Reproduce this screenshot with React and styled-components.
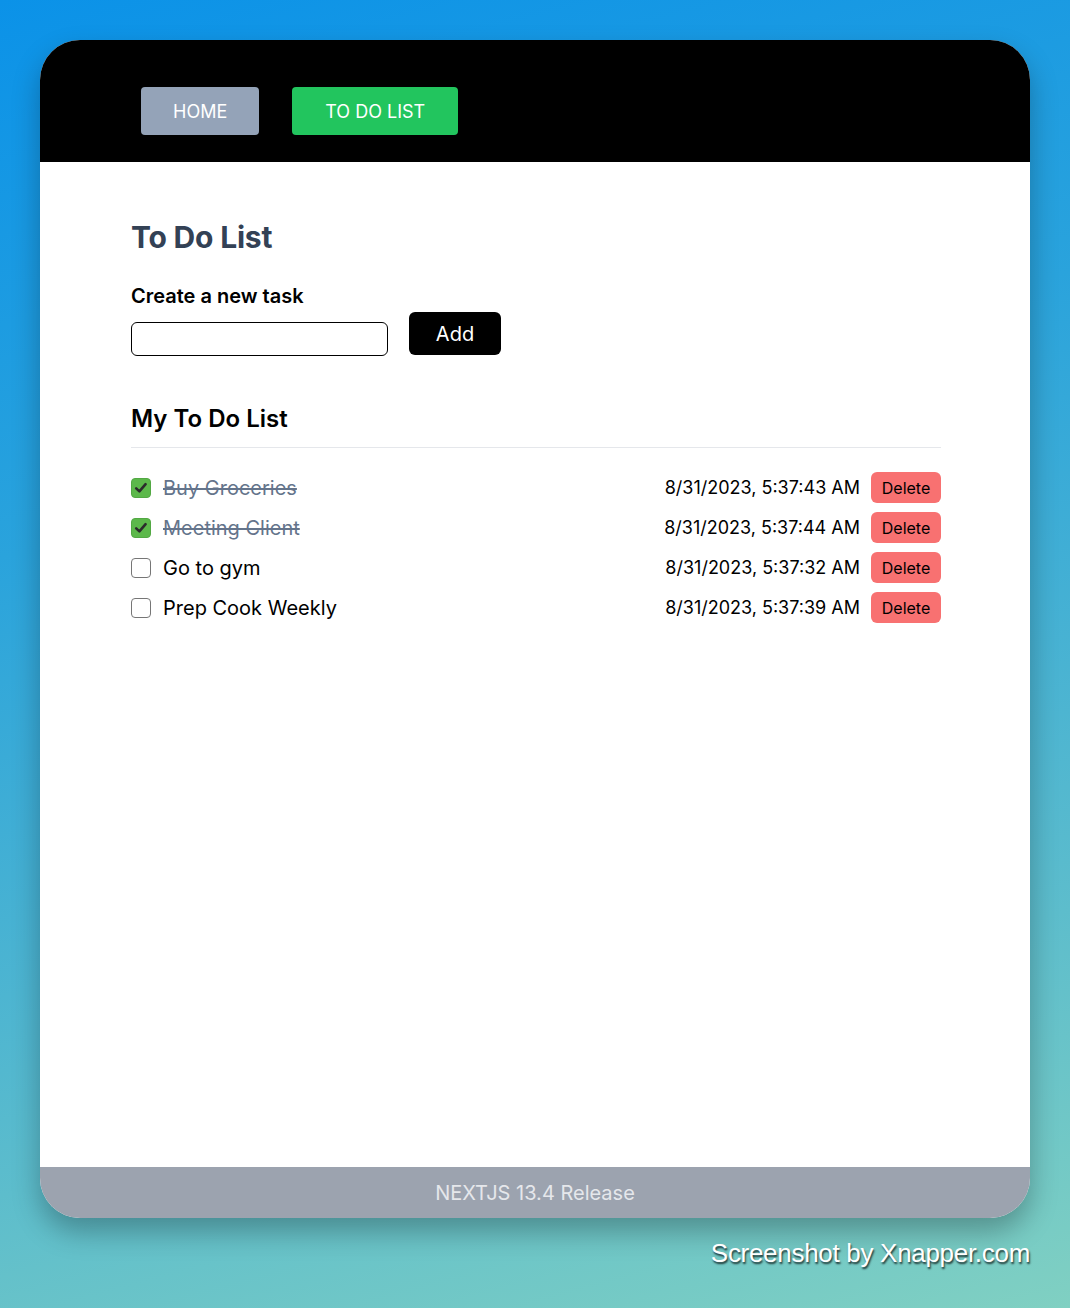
import React, { useState } from "react";
import styled, { createGlobalStyle } from "styled-components";

const Global = createGlobalStyle`
  html, body { margin: 0; padding: 0; }
  body {
    width: 1070px;
    min-height: 1308px;
    font-family: Inter, "Noto Sans", "Liberation Sans", sans-serif;
    background: linear-gradient(165deg, #0b92e8 0%, #2aa3dc 35%, #5dbdcc 75%, #80d0c2 100%);
  }
  * { box-sizing: border-box; }
`;

const Page = styled.div`
  width: 1070px;
  height: 1308px;
  padding: 40px 40px 0;
  display: flex;
  flex-direction: column;
`;

const Window = styled.div`
  height: 1178px;
  border-radius: 40px;
  overflow: hidden;
  background: #fff;
  display: flex;
  flex-direction: column;
  box-shadow: 0 14px 28px rgba(0, 0, 0, 0.28);
`;

const Header = styled.header`
  height: 122px;
  background: #000;
  display: flex;
  align-items: flex-start;
  gap: 33px;
  padding: 47px 0 0 101px;
`;

const NavButton = styled.a`
  height: 48px;
  padding: 0 ${(p) => p.$px}px;
  display: flex;
  align-items: center;
  border-radius: 4px;
  background: ${(p) => (p.$active ? "#22c55e" : "#94a3b8")};
  color: #fff;
  font-size: 18px;
  text-transform: uppercase;
  text-decoration: none;
  cursor: pointer;
`;

const Main = styled.main`
  flex: 1;
  padding: 57px 89px 0 91px;
  display: flex;
  flex-direction: column;
`;

const Title = styled.h1`
  margin: 0;
  font-size: 30px;
  line-height: 36px;
  font-weight: 700;
  color: #334155;
  letter-spacing: -0.2px;
`;

const Label = styled.label`
  margin-top: 27px;
  font-size: 20px;
  line-height: 28px;
  font-weight: 600;
  color: #000;
`;

const FormRow = styled.form`
  margin-top: 2px;
  display: flex;
  align-items: flex-end;
  gap: 21px;
`;

const TaskInput = styled.input`
  width: 257px;
  height: 34px;
  margin-bottom: -1px;
  border: 1px solid #000;
  border-radius: 6px;
  padding: 0 8px;
  font: inherit;
  font-size: 16px;
  outline: none;
`;

const AddButton = styled.button`
  width: 92px;
  height: 43px;
  border: none;
  border-radius: 6px;
  background: #000;
  color: #fff;
  font-family: inherit;
  font-size: 20px;
  cursor: pointer;
`;

const SubTitle = styled.h2`
  margin: 48px 0 0;
  padding-bottom: 12px;
  border-bottom: 1px solid #e5e7eb;
  font-size: 24px;
  line-height: 32px;
  font-weight: 600;
  color: #000;
`;

const List = styled.ul`
  list-style: none;
  margin: 24px 0 0;
  padding: 0;
  display: flex;
  flex-direction: column;
  gap: 9px;
`;

const Row = styled.li`
  height: 31px;
  display: flex;
  align-items: center;
`;

const Check = styled.span`
  width: 20px;
  height: 20px;
  flex: none;
  border-radius: 4px;
  border: 1px solid ${(p) => (p.$checked ? "#52a843" : "#767676")};
  background: ${(p) => (p.$checked ? "#5cb84a" : "#fff")};
  display: flex;
  align-items: center;
  justify-content: center;
  cursor: pointer;
`;

const TaskText = styled.span`
  margin-left: 12px;
  flex: 1;
  font-size: 20px;
  color: ${(p) => (p.$done ? "#64748b" : "#000")};
  text-decoration: ${(p) => (p.$done ? "line-through" : "none")};
  text-decoration-thickness: 1.5px;
`;

const DateText = styled.span`
  font-size: 18px;
  color: #000;
  margin-right: 11px;
`;

const DeleteButton = styled.button`
  width: 70px;
  height: 31px;
  border: none;
  border-radius: 6px;
  background: #f87171;
  color: #000;
  font-family: inherit;
  font-size: 16px;
  padding: 0;
  cursor: pointer;
`;

const Footer = styled.footer`
  height: 51px;
  background: #9ca3af;
  color: #e5e7eb;
  font-size: 20px;
  display: flex;
  align-items: center;
  justify-content: center;
`;

const Watermark = styled.div`
  align-self: flex-end;
  margin-top: 20px;
  font-family: "Liberation Sans", Arial, sans-serif;
  font-size: 26px;
  line-height: 30px;
  letter-spacing: -0.3px;
  color: #fff;
  text-shadow: 1px 2px 2px rgba(0, 0, 0, 0.75);
`;

const initial = [
  { id: 1, text: "Buy Groceries", date: "8/31/2023, 5:37:43 AM", done: true },
  { id: 2, text: "Meeting Client", date: "8/31/2023, 5:37:44 AM", done: true },
  { id: 3, text: "Go to gym", date: "8/31/2023, 5:37:32 AM", done: false },
  { id: 4, text: "Prep Cook Weekly", date: "8/31/2023, 5:37:39 AM", done: false },
];

export default function App() {
  const [tasks, setTasks] = useState(initial);
  const toggle = (id) =>
    setTasks((t) => t.map((x) => (x.id === id ? { ...x, done: !x.done } : x)));
  const remove = (id) => setTasks((t) => t.filter((x) => x.id !== id));

  return (
    <>
      <Global />
      <Page>
        <Window>
          <Header>
            <NavButton $px={32}>Home</NavButton>
            <NavButton $px={33} $active>
              To Do List
            </NavButton>
          </Header>
          <Main>
            <Title>To Do List</Title>
            <Label htmlFor="task">Create a new task</Label>
            <FormRow onSubmit={(e) => e.preventDefault()}>
              <TaskInput id="task" type="text" />
              <AddButton type="submit">Add</AddButton>
            </FormRow>
            <SubTitle>My To Do List</SubTitle>
            <List>
              {tasks.map((t) => (
                <Row key={t.id}>
                  <Check
                    role="checkbox"
                    aria-checked={t.done}
                    $checked={t.done}
                    onClick={() => toggle(t.id)}
                  >
                    {t.done && (
                      <svg width="16" height="16" viewBox="0 0 16 16">
                        <path
                          d="M3.2 8.4 L6.4 11.4 L12.6 4.2"
                          fill="none"
                          stroke="#2b2b2b"
                          strokeWidth="2.6"
                          strokeLinecap="round"
                          strokeLinejoin="round"
                        />
                      </svg>
                    )}
                  </Check>
                  <TaskText $done={t.done}>{t.text}</TaskText>
                  <DateText>{t.date}</DateText>
                  <DeleteButton onClick={() => remove(t.id)}>Delete</DeleteButton>
                </Row>
              ))}
            </List>
          </Main>
          <Footer>NEXTJS 13.4 Release</Footer>
        </Window>
        <Watermark>Screenshot by Xnapper.com</Watermark>
      </Page>
    </>
  );
}
